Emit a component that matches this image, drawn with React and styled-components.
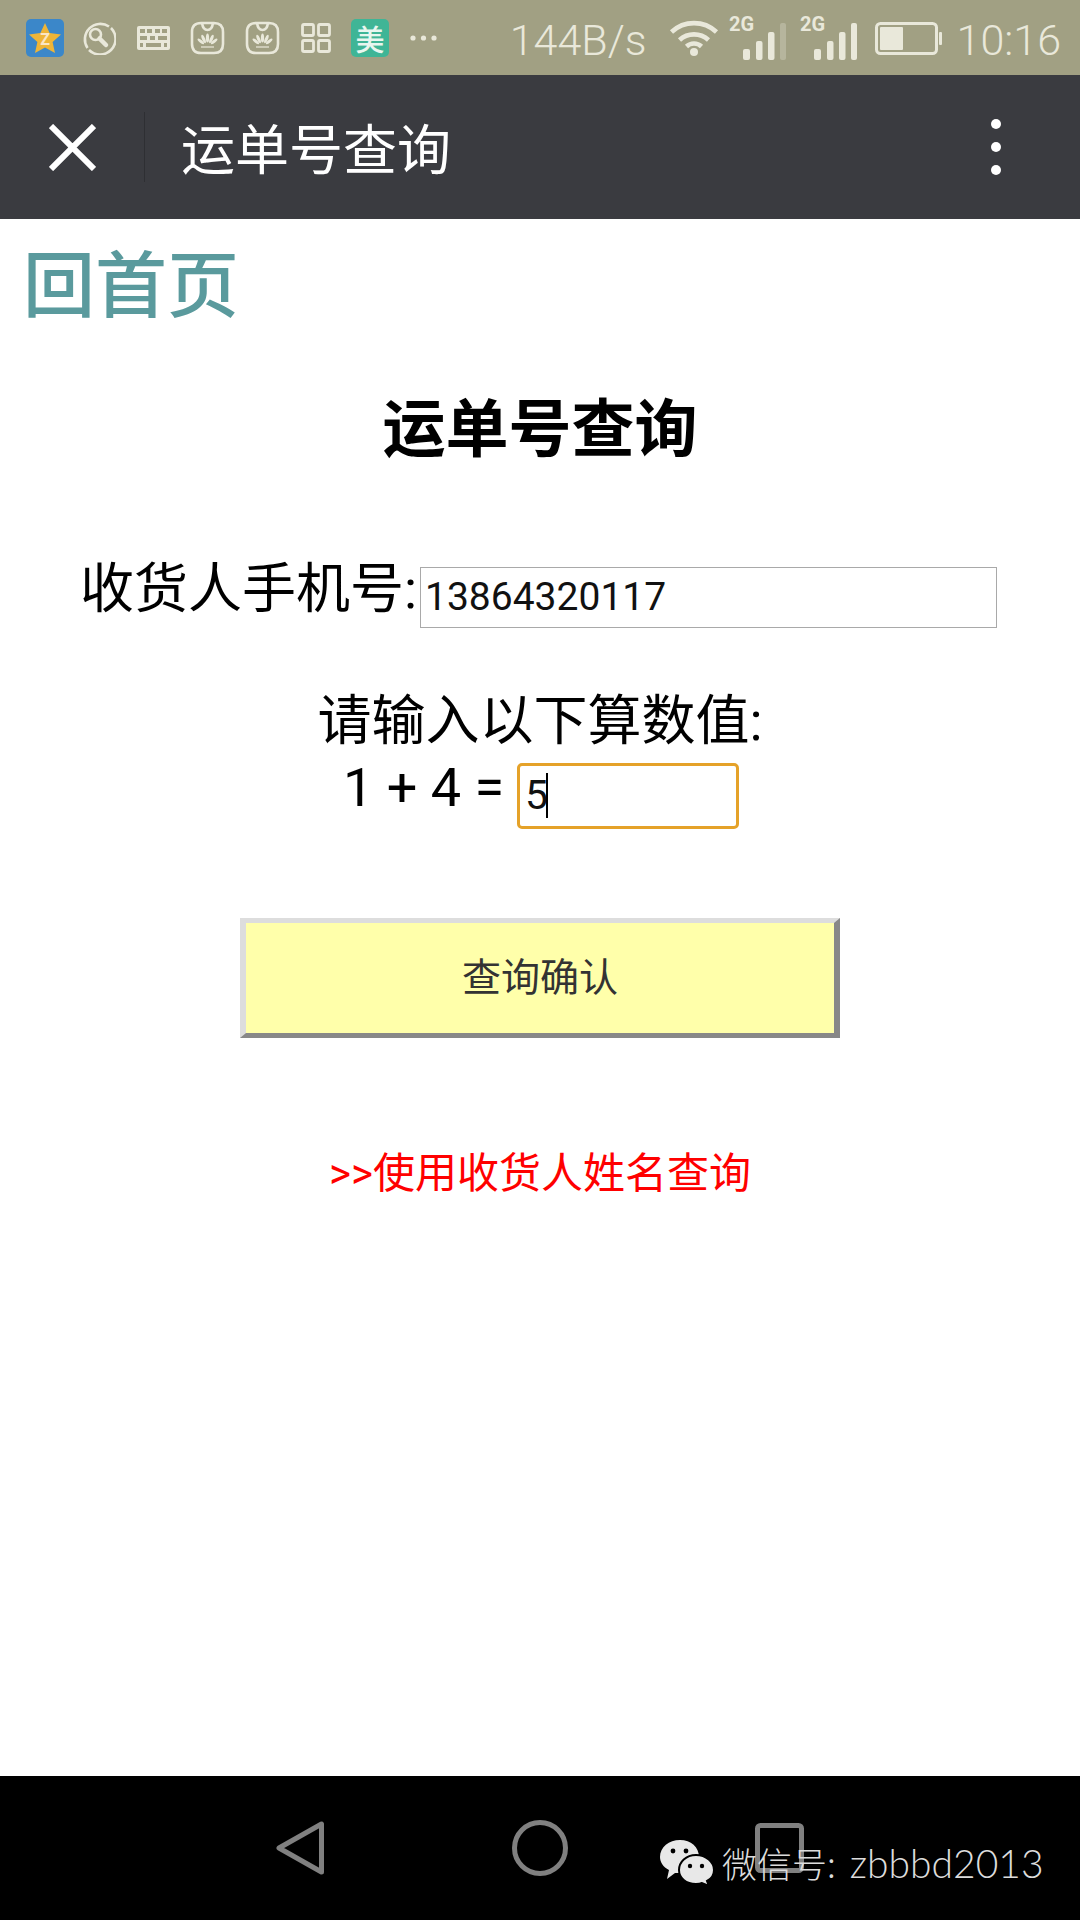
import styled, { createGlobalStyle } from 'styled-components';

const CJK = '"Noto Sans CJK SC", sans-serif';
const LIGHT = '#e9e8da';
const BAR = '#a1a083';

const GlobalStyle = createGlobalStyle`
  html, body {
    margin: 0;
    padding: 0;
    background: #ffffff;
  }
  * {
    box-sizing: border-box;
  }
`;

const Phone = styled.div`
  width: 1080px;
  height: 1920px;
  display: flex;
  flex-direction: column;
  overflow: hidden;
  font-family: Roboto, ${CJK};
`;

const StatusBar = styled.div`
  height: 75px;
  flex: none;
  background: ${BAR};
  display: flex;
  align-items: center;
  justify-content: space-between;
  padding: 0 19px 0 26px;
`;

const StatusGroup = styled.div`
  display: flex;
  align-items: center;
`;

const Slot = styled.div`
  display: flex;
  align-items: center;
  margin-left: ${(p) => p.$ml || 0}px;
`;

const Tile = styled.div`
  width: 38px;
  height: 38px;
  border-radius: 5px;
  background: #3fb596;
  color: #e8f6ef;
  display: flex;
  align-items: center;
  justify-content: center;
  font-family: ${CJK};
  font-weight: 500;
  font-size: 29px;
  line-height: 38px;
  margin-left: 20px;
`;

const StatusText = styled.span`
  color: ${LIGHT};
  font-family: Roboto, sans-serif;
  font-weight: 300;
  font-size: 43px;
  line-height: 50px;
  padding-top: 4px;
  margin-left: ${(p) => p.$ml || 0}px;
`;

const NavBar = styled.div`
  height: 144px;
  flex: none;
  background: #3a3b40;
  display: flex;
  align-items: center;
  padding: 0 0 0 49px;
`;

const NavDivider = styled.div`
  width: 1px;
  height: 70px;
  background: #2e2f33;
  margin: 0 36px 0 48px;
`;

const NavTitle = styled.div`
  flex: 1;
  color: #ffffff;
  font-family: ${CJK};
  font-size: 54px;
  line-height: 60px;
`;

const MenuDots = styled.div`
  display: flex;
  flex-direction: column;
  gap: 13px;
  margin-right: 79px;
`;

const MenuDot = styled.span`
  width: 10px;
  height: 10px;
  border-radius: 50%;
  background: #ffffff;
`;

const Main = styled.main`
  flex: 1;
  background: #ffffff;
  padding-top: 25px;
  color: #000000;
`;

const HomeLink = styled.a`
  display: block;
  padding-left: 23px;
  color: #5a9a9d;
  font-family: ${CJK};
  font-weight: 500;
  font-size: 72px;
  line-height: 72px;
`;

const Heading = styled.h1`
  margin: 68px 0 0;
  text-align: center;
  font-family: ${CJK};
  font-weight: 700;
  font-size: 63px;
  line-height: 80px;
`;

const FormRow = styled.div`
  display: flex;
  justify-content: center;
  align-items: flex-start;
  margin-top: ${(p) => p.$mt}px;
  padding-left: ${(p) => p.$pl || 0}px;
  padding-right: ${(p) => p.$pr || 0}px;
`;

const FieldLabel = styled.label`
  font-size: 54px;
  line-height: 54px;
  margin-top: ${(p) => p.$mt || 0}px;
  margin-right: ${(p) => p.$mr || 0}px;
  white-space: pre;
`;

const CenterLine = styled.div`
  margin-top: 67px;
  text-align: center;
  font-size: 54px;
  line-height: 54px;
`;

const PhoneInput = styled.input`
  width: 577px;
  height: 61px;
  padding: 0 4px 2px;
  border: 1px solid #a9a9a9;
  border-radius: 0;
  outline: none;
  background: #ffffff;
  color: #111111;
  font-family: Roboto, sans-serif;
  font-size: 39px;
`;

const AnswerWrap = styled.div`
  position: relative;
  width: 222px;
  height: 66px;
  margin-top: 2px;
`;

const AnswerInput = styled.input`
  width: 100%;
  height: 100%;
  padding: 0 5px 2px;
  border: 3px solid #e5a229;
  border-radius: 5px;
  outline: none;
  background: #ffffff;
  color: #111111;
  font-family: Roboto, sans-serif;
  font-size: 41px;
`;

const Caret = styled.span`
  position: absolute;
  left: 29px;
  top: 10px;
  width: 2px;
  height: 45px;
  background: #000000;
`;

const SubmitButton = styled.button`
  display: block;
  width: 600px;
  height: 120px;
  margin: 89px auto 0;
  border-width: 5px 6px;
  border-style: solid;
  border-color: #dddddd #888888 #888888 #dddddd;
  background: #ffffaa;
  color: #333333;
  font-family: ${CJK};
  font-size: 39px;
  padding: 0 0 9px;
`;

const AltLink = styled.a`
  display: block;
  margin-top: 111px;
  text-align: center;
  color: #ff0000;
  font-size: 42px;
  line-height: 50px;
`;

const NavKeys = styled.div`
  position: relative;
  height: 144px;
  flex: none;
  background: #000000;
  display: flex;
  align-items: center;
  justify-content: center;
  gap: 187px;
`;

const Watermark = styled.div`
  position: absolute;
  left: 660px;
  top: 64px;
  display: flex;
  align-items: center;
  color: #dcdcdc;
  line-height: 46px;
`;

const WatermarkCn = styled.span`
  margin-left: 8px;
  font-family: ${CJK};
  font-weight: 300;
  font-size: 35px;
`;

const WatermarkId = styled.span`
  margin-left: 14px;
  font-family: Lato, sans-serif;
  font-weight: 300;
  font-size: 39px;
`;

const QzoneIcon = () => (
  <svg width="38" height="38" viewBox="0 0 38 38">
    <rect width="38" height="38" rx="5" fill="#3b87c9" />
    <path d="M19 4 L23.6 14 L35 15.4 L26.6 23 L29 34 L19 28.4 L9 34 L11.4 23 L3 15.4 L14.4 14 Z" fill="#efb537" />
    <text x="19" y="26" textAnchor="middle" fontFamily="Roboto, sans-serif" fontWeight="700" fontSize="16" fill="#fbe6c4">
      Z
    </text>
  </svg>
);

const KeyIcon = () => (
  <svg width="34" height="34" viewBox="0 0 34 34" fill="none" stroke={LIGHT} strokeWidth="2.6">
    <path d="M27 5.5 A15.5 15.5 0 0 0 5.5 27" />
    <path d="M7 29 A15.5 15.5 0 0 0 29 7" />
    <circle cx="13.5" cy="13.5" r="5.5" />
    <path d="M17.5 17.5 L24 24" strokeWidth="4.5" strokeLinecap="round" />
  </svg>
);

const KeyboardIcon = () => (
  <svg width="33" height="24" viewBox="0 0 33 24">
    <rect width="33" height="24" rx="2" fill={LIGHT} />
    <g fill={BAR}>
      <rect x="3" y="3" width="5" height="4" />
      <rect x="10" y="3" width="5" height="4" />
      <rect x="18" y="3" width="5" height="4" />
      <rect x="25" y="3" width="5" height="4" />
      <rect x="3" y="10" width="7" height="4" />
      <rect x="13" y="10" width="5" height="4" />
      <rect x="21" y="10" width="9" height="4" />
      <rect x="3" y="17" width="3" height="4" />
      <rect x="9" y="17" width="15" height="4" />
      <rect x="27" y="17" width="3" height="4" />
    </g>
  </svg>
);

const HuaweiIcon = () => (
  <svg width="35" height="34" viewBox="0 0 35 34">
    <path
      d="M11 2 H24 Q33 2 33 11 V23 Q33 32 24 32 H11 Q2 32 2 23 V11 Q2 2 11 2 Z M12 2 Q13 9 17.5 9 Q22 9 23 2"
      fill="none"
      stroke={LIGHT}
      strokeWidth="2.6"
    />
    <g fill={LIGHT}>
      <ellipse cx="17.5" cy="17" rx="1.6" ry="4.5" />
      <ellipse cx="13.6" cy="18" rx="1.6" ry="4.5" transform="rotate(-22 13.6 18)" />
      <ellipse cx="21.4" cy="18" rx="1.6" ry="4.5" transform="rotate(22 21.4 18)" />
      <ellipse cx="10.8" cy="20.4" rx="1.5" ry="4" transform="rotate(-50 10.8 20.4)" />
      <ellipse cx="24.2" cy="20.4" rx="1.5" ry="4" transform="rotate(50 24.2 20.4)" />
      <rect x="11" y="25.4" width="13" height="1.2" />
    </g>
  </svg>
);

const GridIcon = () => (
  <svg width="30" height="30" viewBox="0 0 30 30" fill="none" stroke={LIGHT} strokeWidth="2.8">
    <rect x="1.5" y="1.5" width="11" height="11" rx="1.5" />
    <rect x="17.5" y="1.5" width="11" height="11" rx="1.5" />
    <rect x="1.5" y="17.5" width="11" height="11" rx="1.5" />
    <rect x="17.5" y="17.5" width="11" height="11" rx="1.5" />
  </svg>
);

const MoreIcon = () => (
  <svg width="27" height="8" viewBox="0 0 27 8" fill={LIGHT}>
    <circle cx="3" cy="4" r="2.6" />
    <circle cx="13.5" cy="4" r="2.6" />
    <circle cx="24" cy="4" r="2.6" />
  </svg>
);

const WifiIcon = () => (
  <svg width="50" height="37" viewBox="0 0 50 37" fill="none" stroke={LIGHT} strokeWidth="4.6">
    <path d="M2.5 13 A33 33 0 0 1 47.5 13" />
    <path d="M10.5 21 A21.5 21.5 0 0 1 39.5 21" />
    <path d="M17.5 27.5 A11 11 0 0 1 32.5 27.5" />
    <circle cx="25" cy="33" r="4" fill={LIGHT} stroke="none" />
  </svg>
);

const SignalIcon = ({ dim }) => (
  <svg width="58" height="48" viewBox="0 0 58 48" fill={LIGHT} style={{ marginTop: -3 }}>
    <text x="0" y="19" fontFamily="Roboto, sans-serif" fontWeight="700" fontSize="20">
      2G
    </text>
    <rect x="14" y="37" width="7" height="11" rx="2" />
    <rect x="27" y="29" width="6.5" height="19" rx="2" />
    <rect x="39" y="20" width="6.5" height="28" rx="2" />
    <rect x="51" y="11" width="6" height="37" rx="2" opacity={dim ? 0.3 : 1} />
  </svg>
);

const BatteryIcon = () => (
  <svg width="67" height="33" viewBox="0 0 67 33" style={{ marginTop: 1 }}>
    <rect x="1.5" y="1.5" width="60" height="30" rx="4" fill="none" stroke={LIGHT} strokeWidth="3" />
    <rect x="5" y="5" width="23" height="23" rx="1" fill={LIGHT} />
    <rect x="64" y="10" width="3" height="13" rx="1" fill={LIGHT} />
  </svg>
);

const CloseIcon = () => (
  <svg width="47" height="47" viewBox="0 0 47 47" stroke="#ffffff" strokeWidth="6">
    <path d="M2 2 L45 45 M45 2 L2 45" />
  </svg>
);

const BackKey = () => (
  <svg width="49" height="54" viewBox="0 0 49 54" fill="none" stroke="#808080" strokeWidth="5" strokeLinejoin="round">
    <path d="M45.5 3 V51 L3 27 Z" />
  </svg>
);

const HomeKey = () => (
  <svg width="56" height="56" viewBox="0 0 56 56" fill="none" stroke="#808080" strokeWidth="5">
    <circle cx="28" cy="28" r="25.5" />
  </svg>
);

const RecentKey = () => (
  <svg width="49" height="50" viewBox="0 0 49 50" fill="none" stroke="#808080" strokeWidth="5">
    <rect x="2.5" y="2.5" width="44" height="45" rx="3" />
  </svg>
);

const WechatLogo = () => (
  <svg width="54" height="46" viewBox="0 0 54 46">
    <path d="M20 0 C31 0 39 7 39 17 C39 27 31 33 20 33 L15 33 L7 39 L9 30 C3 27 0 22 0 17 C0 7 9 0 20 0 Z" fill="#e8e8e8" />
    <path
      d="M36 15 C46 15 54 22 54 30 C54 35 51 39 47 41 L49 46 L42 43 C40 44 38 44 36 44 C26 44 19 38 19 30 C19 22 26 15 36 15 Z"
      fill="#e8e8e8"
      stroke="#000000"
      strokeWidth="2"
    />
    <g fill="#000000">
      <circle cx="13" cy="11" r="2.4" />
      <circle cx="26" cy="11" r="2.4" />
      <circle cx="30" cy="26" r="2.2" />
      <circle cx="42" cy="26" r="2.2" />
    </g>
  </svg>
);

export default function App() {
  return (
    <>
      <GlobalStyle />
      <Phone>
        <StatusBar>
          <StatusGroup>
            <QzoneIcon />
            <Slot $ml={18}><KeyIcon /></Slot>
            <Slot $ml={21}><KeyboardIcon /></Slot>
            <Slot $ml={20}><HuaweiIcon /></Slot>
            <Slot $ml={20}><HuaweiIcon /></Slot>
            <Slot $ml={21}><GridIcon /></Slot>
            <Tile>美</Tile>
            <Slot $ml={21}><MoreIcon /></Slot>
          </StatusGroup>
          <StatusGroup>
            <StatusText>144B/s</StatusText>
            <Slot $ml={22}><WifiIcon /></Slot>
            <Slot $ml={10}><SignalIcon dim /></Slot>
            <Slot $ml={13}><SignalIcon /></Slot>
            <Slot $ml={17}><BatteryIcon /></Slot>
            <StatusText $ml={15}>10:16</StatusText>
          </StatusGroup>
        </StatusBar>

        <NavBar>
          <CloseIcon />
          <NavDivider />
          <NavTitle>运单号查询</NavTitle>
          <MenuDots>
            <MenuDot />
            <MenuDot />
            <MenuDot />
          </MenuDots>
        </NavBar>

        <Main>
          <HomeLink>回首页</HomeLink>
          <Heading>运单号查询</Heading>

          <FormRow $mt={103} $pr={3}>
            <FieldLabel $mt={-4} $mr={3}>收货人手机号:</FieldLabel>
            <PhoneInput readOnly value="13864320117" />
          </FormRow>

          <CenterLine>请输入以下算数值:</CenterLine>
          <FormRow $mt={12} $pl={2}>
            <FieldLabel $mr={13}>1 + 4 =</FieldLabel>
            <AnswerWrap>
              <AnswerInput readOnly value="5" />
              <Caret />
            </AnswerWrap>
          </FormRow>

          <SubmitButton>查询确认</SubmitButton>
          <AltLink>&gt;&gt;使用收货人姓名查询</AltLink>
        </Main>

        <NavKeys>
          <BackKey />
          <HomeKey />
          <RecentKey />
          <Watermark>
            <WechatLogo />
            <WatermarkCn>微信号:</WatermarkCn>
            <WatermarkId>zbbbd2013</WatermarkId>
          </Watermark>
        </NavKeys>
      </Phone>
    </>
  );
}
